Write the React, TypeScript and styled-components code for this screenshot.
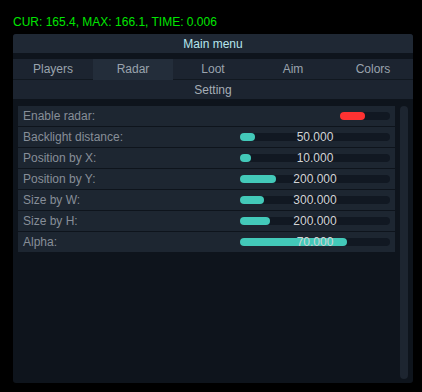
import React from "react";
import styled, { createGlobalStyle } from "styled-components";

const Global = createGlobalStyle`
  html, body { margin: 0; padding: 0; background: #000; }
  body { font-family: "Liberation Sans", Arial, sans-serif; font-size: 12px; }
`;

const Page = styled.div`
  width: 422px;
  height: 392px;
  background: #000;
  padding: 15px 9px 0 13px;
  box-sizing: border-box;
`;

const Stats = styled.div`
  color: #00e600;
  line-height: 14px;
  height: 14px;
  margin-bottom: 5px;
`;

const Window = styled.div`
  width: 400px;
  height: 349px;
  background: #0e141c;
  border-radius: 3px;
  display: flex;
  flex-direction: column;
  overflow: hidden;
`;

const TitleBar = styled.div`
  height: 19px;
  line-height: 21px;
  background: #1f2834;
  color: #b6e6ee;
  text-align: center;
  margin-bottom: 6px;
`;

const Tabs = styled.div`
  display: grid;
  grid-template-columns: repeat(5, 1fr);
  height: 20px;
  background: #1c2430;
  border-bottom: 1px solid #111820;
`;

const Tab = styled.div<{ $active?: boolean }>`
  line-height: 21px;
  text-align: center;
  color: #9aa3ad;
  background: ${(p) => (p.$active ? "#232d3a" : "transparent")};
`;

const SubBar = styled.div`
  height: 19px;
  line-height: 20px;
  background: #1c2430;
  color: #a6aeb7;
  text-align: center;
`;

const Content = styled.div`
  flex: 1;
  display: flex;
  gap: 5px;
  padding: 7px 5px 4px 5px;
`;

const List = styled.div`
  flex: 1;
  display: flex;
  flex-direction: column;
  gap: 1px;
`;

const Row = styled.div`
  height: 20px;
  background: #1d2631;
  display: flex;
  align-items: center;
  justify-content: space-between;
  padding: 0 5px;
`;

const Label = styled.span`
  color: #878e98;
  line-height: 21px;
`;

const Slider = styled.div<{ $w: number }>`
  position: relative;
  width: ${(p) => p.$w}px;
  height: 8px;
  border-radius: 4px;
  background: #111822;
`;

const Fill = styled.div<{ $color: string }>`
  height: 100%;
  border-radius: 4px;
  background: ${(p) => p.$color};
`;

const Value = styled.span`
  position: absolute;
  left: 0;
  right: 0;
  top: -4px;
  line-height: 17px;
  text-align: center;
  color: #d2d4d6;
`;

const Scrollbar = styled.div`
  width: 8px;
  border-radius: 4px;
  background: #1d2530;
`;

const items = [
  { label: "Backlight distance:", value: "50.000", fill: 15 },
  { label: "Position by X:", value: "10.000", fill: 11 },
  { label: "Position by Y:", value: "200.000", fill: 36 },
  { label: "Size by W:", value: "300.000", fill: 24 },
  { label: "Size by H:", value: "200.000", fill: 30 },
  { label: "Alpha:", value: "70.000", fill: 107 },
];

const tabs = ["Players", "Radar", "Loot", "Aim", "Colors"];

export default function App() {
  return (
    <Page>
      <Global />
      <Stats>CUR: 165.4, MAX: 166.1, TIME: 0.006</Stats>
      <Window>
        <TitleBar>Main menu</TitleBar>
        <Tabs>
          {tabs.map((t) => (
            <Tab key={t} $active={t === "Radar"}>
              {t}
            </Tab>
          ))}
        </Tabs>
        <SubBar>Setting</SubBar>
        <Content>
          <List>
            <Row>
              <Label>Enable radar:</Label>
              <Slider $w={50}>
                <Fill $color="#ff3232" style={{ width: "25px" }} />
              </Slider>
            </Row>
            {items.map((it) => (
              <Row key={it.label}>
                <Label>{it.label}</Label>
                <Slider $w={150}>
                  <Fill $color="#43c9b9" style={{ width: `${it.fill}px` }} />
                  <Value>{it.value}</Value>
                </Slider>
              </Row>
            ))}
          </List>
          <Scrollbar />
        </Content>
      </Window>
    </Page>
  );
}
